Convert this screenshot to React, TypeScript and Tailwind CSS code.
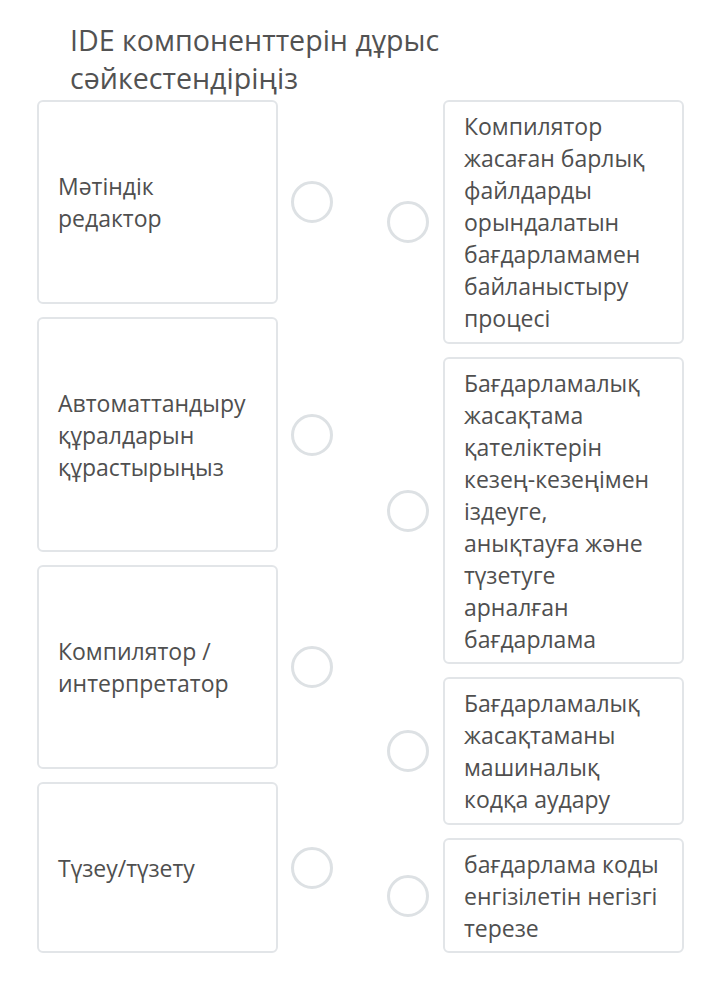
import React from "react";

const font = { fontFamily: '"Open Sans", "Noto Sans", sans-serif' };

const leftItems = [
  { text: ["Мәтіндік", "редактор"], h: "h-[204px]" },
  { text: ["Автоматтандыру", "құралдарын", "құрастырыңыз"], h: "h-[235px]" },
  { text: ["Компилятор /", "интерпретатор"], h: "h-[204px]" },
  { text: ["Түзеу/түзету"], h: "h-[171px]" },
];

const rightItems = [
  {
    text: ["Компилятор", "жасаған барлық", "файлдарды", "орындалатын", "бағдарламамен", "байланыстыру", "процесі"],
    h: "h-[244px]",
  },
  {
    text: ["Бағдарламалық", "жасақтама", "қателіктерін", "кезең-кезеңімен", "іздеуге,", "анықтауға және", "түзетуге", "арналған", "бағдарлама"],
    h: "h-[307px]",
  },
  { text: ["Бағдарламалық", "жасақтаманы", "машиналық", "кодқа аудару"], h: "h-[148px]" },
  { text: ["бағдарлама коды", "енгізілетін негізгі", "терезе"], h: "h-[115px]" },
];

function Circle() {
  return <div className="w-[42px] h-[42px] shrink-0 rounded-full border-[3px] border-[#dde1e4] bg-white" />;
}

export default function App() {
  return (
    <div className="w-[720px] min-h-[981px] bg-white text-[#4f4f4f]" style={font}>
      <h1 className="pl-[70px] pt-[21px] text-[28.6px] leading-[38px] font-normal text-[#525252]">
        IDE компоненттерін дұрыс
        <br />
        сәйкестендіріңіз
      </h1>
      <div className="mt-[3px] flex pl-[37px]">
        <div className="flex flex-col gap-[13px]">
          {leftItems.map((it, i) => (
            <div key={i} className="flex items-center gap-[13px]">
              <div
                className={`w-[241px] ${it.h} flex items-center rounded-[6px] border-2 border-[#e2e5e8] pl-[19px] pr-2 text-[23px] leading-[32px]`}
              >
                <div>
                  {it.text.map((l, j) => (
                    <div key={j}>{l}</div>
                  ))}
                </div>
              </div>
              <Circle />
            </div>
          ))}
        </div>
        <div className="ml-[54px] flex flex-col gap-[13px]">
          {rightItems.map((it, i) => (
            <div key={i} className="flex items-center gap-[14px]">
              <Circle />
              <div
                className={`w-[241px] ${it.h} flex items-center rounded-[6px] border-2 border-[#e2e5e8] pl-[19px] pr-2 text-[23px] leading-[32px]`}
              >
                <div>
                  {it.text.map((l, j) => (
                    <div key={j} className="whitespace-nowrap">{l}</div>
                  ))}
                </div>
              </div>
            </div>
          ))}
        </div>
      </div>
    </div>
  );
}
